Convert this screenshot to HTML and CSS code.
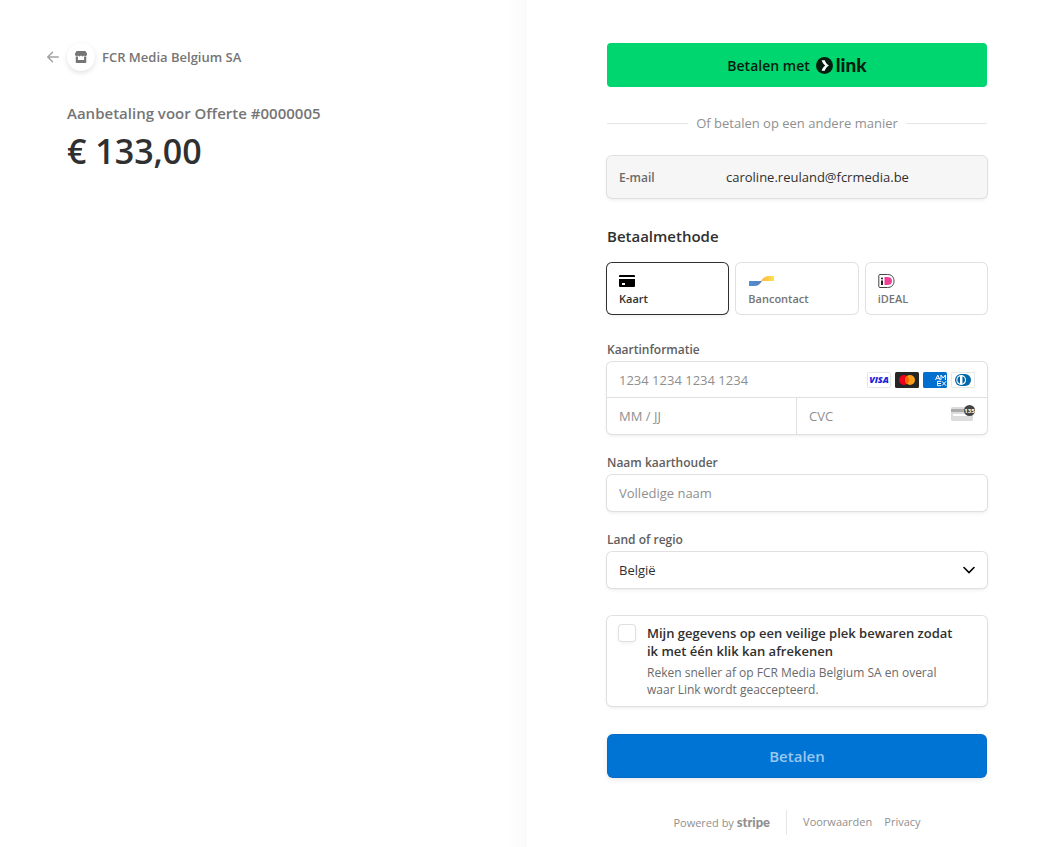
FILE: index.html
```html
<!DOCTYPE html>
<html lang="nl">
<head>
    <meta charset="UTF-8">
    <meta name="viewport" content="width=device-width, initial-scale=1.0">
    <title>FCR Media Belgium SA</title>
    <link rel="stylesheet" href="styles.css">
</head>
<body>
    <div class="checkout">
        <section class="overview">
            <div class="column">
                <header class="merchant">
                    <a href="#" class="merchant-link" aria-label="Terug">
                        <svg class="arrow" width="12" height="12" viewBox="0 0 16 16" fill="#a3a3a3"><path d="M3.417 7H15a1 1 0 0 1 0 2H3.417l4.591 4.591a1 1 0 0 1-1.415 1.416l-6.3-6.3a1 1 0 0 1 0-1.414l6.3-6.3A1 1 0 0 1 8.008 2.41z"/></svg>
                        <span class="shop-icon">
                            <svg width="12" height="12" viewBox="0 0 16 16" fill="#757575"><path d="M2.2 0h11.6L16 3.4v1.3a2.2 2.2 0 0 1-3.8 1.4 2.9 2.9 0 0 1-4.2 0 2.9 2.9 0 0 1-4.2 0A2.2 2.2 0 0 1 0 4.7V3.4z"/><path d="M1 7.3c1 .3 2 .2 2.900-.4V12h8.200V6.900c.9.6 1.900.7 2.900.4V15a1 1 0 0 1-1 1H2a1 1 0 0 1-1-1z"/></svg>
                        </span>
                        <span class="merchant-name">FCR Media Belgium SA</span>
                    </a>
                </header>
                <p class="product">Aanbetaling voor Offerte #0000005</p>
                <p class="amount">€ 133,00</p>
            </div>
        </section>

        <main class="payment">
            <form class="column">
                <button type="button" class="link-button">
                    <span>Betalen met</span>
                    <span class="link-logo">
                        <svg width="17" height="17" viewBox="0 0 17 17"><circle cx="8.500" cy="8.500" r="8.500" fill="#011e0f"/><path d="M5.600 3.200h3.200c.6 2.200 2 4.200 4.200 5.300-2.200 1.100-3.600 3.100-4.200 5.300H5.600c.7-2.200 1.900-4 3.700-5.300-1.800-1.300-3-3.100-3.700-5.300z" fill="#fff"/></svg>
                        <span class="link-word">link</span>
                    </span>
                </button>

                <div class="divider"><span>Of betalen op een andere manier</span></div>

                <div class="box email-box">
                    <span class="email-label">E-mail</span>
                    <span class="email-value">caroline.reuland@fcrmedia.be</span>
                </div>

                <h2 class="heading">Betaalmethode</h2>
                <div class="methods">
                    <button type="button" class="box method method-active">
                        <svg width="16" height="16" viewBox="0 0 16 16"><path d="M1 2h14a1 1 0 0 1 1 1v1H0V3a1 1 0 0 1 1-1zM0 6h16v7a1 1 0 0 1-1 1H1a1 1 0 0 1-1-1zm3 4v2h3v-2z" fill="#000" fill-rule="evenodd"/></svg>
                        <span>Kaart</span>
                    </button>
                    <button type="button" class="box method">
                        <svg width="26" height="16" viewBox="0 0 26 16">
                            <defs>
                                <linearGradient id="bcBlue"><stop offset="0" stop-color="#4a90d9"/><stop offset="1" stop-color="#5f7fae"/></linearGradient>
                                <linearGradient id="bcYellow"><stop offset="0" stop-color="#ffb545"/><stop offset="1" stop-color="#ffe24a"/></linearGradient>
                            </defs>
                            <path d="M1 8h13c-2 3-4 5-8 5H1z" fill="url(#bcBlue)"/>
                            <path d="M13 8c2-3 4-5 8-5h5v5z" fill="url(#bcYellow)"/>
                        </svg>
                        <span>Bancontact</span>
                    </button>
                    <button type="button" class="box method">
                        <svg width="17" height="16" viewBox="0 0 17 16">
                            <path d="M2 1.500h7.500c4 0 6.500 2.500 6.500 6.500s-2.500 6.500-6.500 6.500H2A1.200 1.200 0 0 1 .8 13.300V2.700A1.200 1.200 0 0 1 2 1.500z" fill="#fff" stroke="#444"/>
                            <path d="M6.500 4H9c3.300 0 5 1.500 5 4s-1.700 4-5 4H6.500z" fill="#ee3f96"/>
                            <circle cx="4" cy="5.500" r="1" fill="#222"/><path d="M3 7.500h2V12H3z" fill="#222"/>
                        </svg>
                        <span>iDEAL</span>
                    </button>
                </div>

                <label class="label" for="cardNumber">Kaartinformatie</label>
                <div class="box card-box">
                    <div class="card-row card-number">
                        <input class="input" id="cardNumber" type="text" placeholder="1234 1234 1234 1234">
                        <div class="brands">
                            <svg width="24" height="16" viewBox="0 0 24 16"><rect x=".5" y=".5" width="23" height="15" rx="1" fill="#fff" stroke="#e6e6e6"/><text x="12" y="11" text-anchor="middle" class="visa">VISA</text></svg>
                            <svg width="24" height="16" viewBox="0 0 24 16"><rect width="24" height="16" rx="1.500" fill="#252525"/><circle cx="9" cy="8" r="5" fill="#eb001b"/><circle cx="15" cy="8" r="5" fill="#f79e1b"/><path d="M12 4a5 5 0 0 1 0 8 5 5 0 0 1 0-8z" fill="#ff5f00"/></svg>
                            <svg width="24" height="16" viewBox="0 0 24 16">
                                <rect width="24" height="16" rx="1.500" fill="#016fd0"/>
                                <path d="M12.500 8l2.300-5 2.300 5M13.500 6.300h2.600M18 8V3l2.200 3L22.400 3v5M18 9.300h-3.500v4.400H18M14.500 11.500H18M19 9.300l4 4.400M23 9.300l-4 4.400" fill="none" stroke="#fff"/>
                            </svg>
                            <svg width="24" height="16" viewBox="0 0 24 16"><rect x=".5" y=".5" width="23" height="15" rx="1" fill="#fff" stroke="#e6e6e6"/><path d="M10 2h4a6 6 0 0 1 0 12h-4a6 6 0 0 1 0-12z" fill="#0069aa"/><circle cx="10.200" cy="8" r="4.900" fill="#fff"/><path d="M9 4.300v7.400a3.900 3.900 0 0 1 0-7.400zM11.400 4.300v7.400a3.900 3.900 0 0 0 0-7.400z" fill="#0069aa"/></svg>
                        </div>
                    </div>
                    <div class="card-row card-expiry">
                        <input class="input" type="text" placeholder="MM / JJ" aria-label="Vervaldatum">
                    </div>
                    <div class="card-row card-cvc">
                        <input class="input" type="text" placeholder="CVC" aria-label="CVC">
                        <svg class="cvc-icon" width="24" height="20" viewBox="0 0 24 20"><rect y="2" width="22" height="14" rx="1.500" fill="#dcdcdc"/><path d="M0 4h22v3H0z" fill="#aaa"/><rect x="2" y="9" width="18" height="2" fill="#fff"/><circle cx="18.500" cy="5.500" r="5.500" fill="#444"/><text x="18.500" y="8" text-anchor="middle" class="cvc-digits">135</text></svg>
                    </div>
                </div>

                <label class="label" for="holder">Naam kaarthouder</label>
                <input class="box input field" id="holder" type="text" placeholder="Volledige naam">

                <label class="label" for="country">Land of regio</label>
                <div class="select-wrap">
                    <select class="box input field" id="country">
                        <option>België</option>
                        <option>Nederland</option>
                    </select>
                    <svg class="chevron" width="12" height="12" viewBox="0 0 12 12"><path d="M1 3.500l5 5 5-5" fill="none" stroke="#000" stroke-width="1.600" stroke-linecap="round"/></svg>
                </div>

                <div class="box save-box">
                    <input type="checkbox" class="checkbox" id="save">
                    <div>
                        <label class="save-title" for="save">Mijn gegevens op een veilige plek bewaren zodat ik met één klik kan afrekenen</label>
                        <p class="save-text">Reken sneller af op FCR Media Belgium SA en overal waar Link wordt geaccepteerd.</p>
                    </div>
                </div>

                <button type="submit" class="pay-button">Betalen</button>

                <footer class="footer">
                    <a href="#" class="powered">Powered by <span class="stripe-word">stripe</span></a>
                    <nav class="footer-links">
                        <a href="#">Voorwaarden</a>
                        <a href="#">Privacy</a>
                    </nav>
                </footer>
            </form>
        </main>
    </div>
</body>
</html>
```

FILE: styles.css
```css
* {
    box-sizing: border-box;
}
body {
    margin: 0;
    font-family: "Open Sans", "Noto Sans", sans-serif;
    font-size: 13px;
    color: #303030;
    background: #fff;
}
button, input, select {
    font-family: inherit;
    font-size: inherit;
    color: inherit;
}
a {
    color: inherit;
    text-decoration: none;
}
p, h2 {
    margin: 0;
}
svg {
    display: block;
    flex-shrink: 0;
}
.checkout {
    display: grid;
    grid-template-columns: 1fr 1fr;
    min-height: 100vh;
    padding-right: 8px;
}
.overview {
    display: flex;
    justify-content: flex-end;
    padding: 43px 80px 0 20px;
    background: linear-gradient(to left, #fafafa, #fff 20px);
}
.payment {
    padding: 43px 20px 0 80px;
}
.column {
    width: 100%;
    max-width: 380px;
}

/* left side */
.merchant {
    margin-left: -20px;
}
.merchant-link {
    display: flex;
    align-items: center;
    height: 28px;
}
.shop-icon {
    display: flex;
    align-items: center;
    justify-content: center;
    width: 28px;
    height: 28px;
    margin: 0 7px 0 8px;
    border-radius: 50%;
    box-shadow: 0 2px 5px rgba(0, 0, 0, 0.12);
}
.merchant-name {
    font-size: 13px;
    font-weight: 600;
    color: #757575;
}
.product {
    margin-top: 32px;
    font-size: 15px;
    line-height: 20px;
    font-weight: 600;
    color: #757575;
}
.amount {
    margin-top: 4px;
    font-size: 34px;
    line-height: 48px;
    font-weight: 600;
}

/* payment form */
.link-button {
    display: flex;
    align-items: center;
    justify-content: center;
    gap: 6px;
    width: 100%;
    height: 44px;
    border: none;
    border-radius: 4px;
    background: #00d66f;
    color: #011e0f;
    font-size: 14px;
    font-weight: 600;
}
.link-logo {
    display: flex;
    align-items: center;
    gap: 3px;
}
.link-word {
    font-family: Lato, sans-serif;
    font-size: 19px;
    line-height: 20px;
    font-weight: 900;
}
.divider {
    display: flex;
    align-items: center;
    gap: 8px;
    margin: 26px 0 23px;
    line-height: 20px;
    color: #8f8f8f;
}
.divider::before,
.divider::after {
    content: "";
    flex: 1;
    height: 1px;
    background: #e6e6e6;
}
.box {
    border: none;
    border-radius: 5px;
    background: #fff;
    box-shadow: 0 0 0 1px #e0e0e0, 0 2px 4px rgba(0, 0, 0, 0.07), 0 1px 2px rgba(0, 0, 0, 0.05);
}
.email-box {
    display: grid;
    grid-template-columns: 107px 1fr;
    align-items: center;
    height: 42px;
    padding: 0 12px;
    background: #f6f6f6;
}
.email-label {
    font-size: 12px;
    font-weight: 600;
    color: #6a6a6a;
}
.heading {
    margin: 27px 0 16px;
    font-size: 15px;
    line-height: 22px;
    font-weight: 600;
}
.methods {
    display: grid;
    grid-template-columns: 1fr 1fr 1fr;
    gap: 8px;
}
.method {
    display: flex;
    flex-direction: column;
    align-items: flex-start;
    height: 51px;
    padding: 10px 12px 0;
    font-size: 11px;
    line-height: 20px;
    font-weight: 600;
    color: #757575;
    box-shadow: 0 0 0 1px #e0e0e0;
}
.method-active {
    color: #303030;
    box-shadow: 0 0 0 1px #303030, 0 2px 4px rgba(0, 0, 0, 0.07);
}
.label {
    display: block;
    margin: 20px 0 3px;
    font-size: 12px;
    line-height: 18px;
    font-weight: 600;
    color: #606060;
}
.methods + .label {
    margin-top: 27px;
}
.input {
    width: 100%;
    min-width: 0;
    height: 36px;
    padding: 0 12px;
    outline: none;
}
.input::placeholder {
    color: #8f8f8f;
    opacity: 1;
}
.card-box {
    display: grid;
    grid-template-columns: 1fr 1fr;
}
.card-row {
    display: flex;
    align-items: center;
    height: 36px;
    padding-right: 12px;
}
.card-row .input {
    border: none;
    background: none;
}
.card-number {
    grid-column: 1 / 3;
    border-bottom: 1px solid #e0e0e0;
}
.card-expiry {
    border-right: 1px solid #e0e0e0;
}
.brands {
    display: flex;
    gap: 4px;
}
.visa {
    font: italic 800 9px "Open Sans", sans-serif;
    fill: #1a1fdb;
}
.cvc-digits {
    font: 700 6px "Open Sans", sans-serif;
    fill: #fff;
}
.cvc-icon {
    margin-bottom: 2px;
}
.field {
    display: block;
}
.select-wrap {
    display: grid;
    align-items: center;
}
.select-wrap > * {
    grid-area: 1 / 1;
}
.select-wrap select {
    appearance: none;
}
.chevron {
    justify-self: end;
    margin-right: 12px;
    pointer-events: none;
}
.save-box {
    display: flex;
    gap: 12px;
    margin-top: 28px;
    padding: 8px 24px 8px 12px;
}
.checkbox {
    appearance: none;
    flex-shrink: 0;
    width: 16px;
    height: 16px;
    margin: 1px 0 0;
    border-radius: 3px;
    box-shadow: 0 0 0 1px #e0e0e0, 0 2px 4px rgba(0, 0, 0, 0.07);
}
.save-title {
    display: block;
    line-height: 18px;
    font-weight: 600;
}
.save-text {
    margin-top: 4px;
    font-size: 12px;
    line-height: 17px;
    color: #6a6a6a;
}
.pay-button {
    display: block;
    width: 100%;
    height: 44px;
    margin-top: 28px;
    border: none;
    border-radius: 6px;
    background: #0074d4;
    color: #99c7ee;
    font-size: 15px;
    font-weight: 600;
    box-shadow: inset 0 0 0 1px rgba(50, 50, 93, 0.1), 0 2px 5px rgba(50, 50, 93, 0.1);
}
.footer {
    display: flex;
    justify-content: center;
    margin-top: 32px;
    font-size: 11px;
    line-height: 24px;
    color: #8f8f8f;
}
.powered {
    padding-right: 16px;
    border-right: 1px solid #e6e6e6;
}
.stripe-word {
    font-family: Lato, sans-serif;
    font-size: 13px;
    font-weight: 900;
}
.footer-links {
    display: flex;
    gap: 12px;
    padding-left: 16px;
}
```
